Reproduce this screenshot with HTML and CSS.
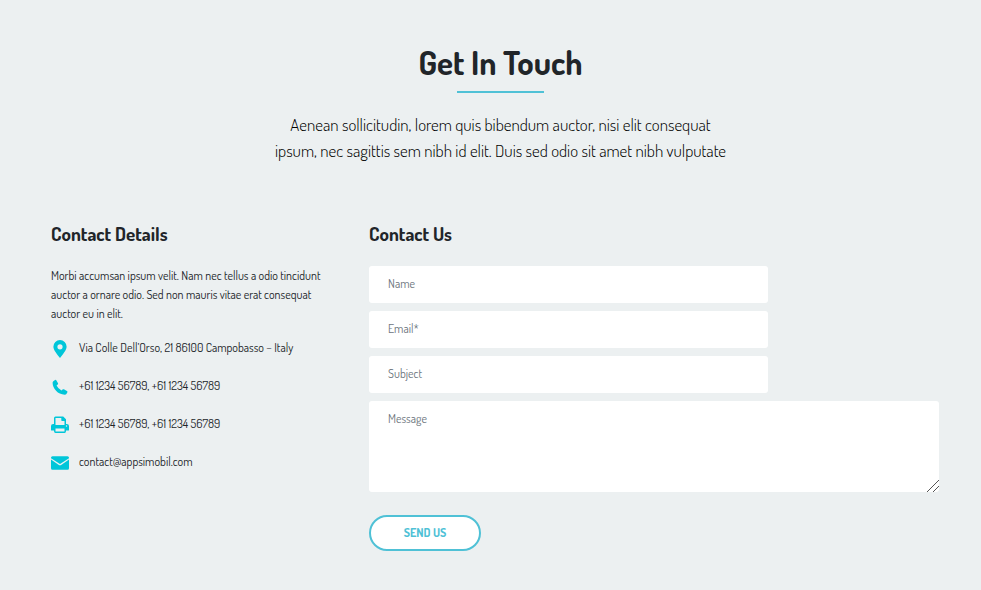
FILE: index.html
```html
<!DOCTYPE html>
<html lang="en">
<head>
<meta charset="utf-8">
<meta name="viewport" content="width=device-width, initial-scale=1">
<title>Get In Touch</title>
<link rel="stylesheet" href="styles.css">
</head>
<body>
<main class="contact">
  <header class="intro">
    <h1>Get In Touch</h1>
    <p>Aenean sollicitudin, lorem quis bibendum auctor, nisi elit consequat<br>ipsum, nec sagittis sem nibh id elit. Duis sed odio sit amet nibh vulputate</p>
  </header>
  <div class="columns">
    <section class="details">
      <h2>Contact Details</h2>
      <p>Morbi accumsan ipsum velit. Nam nec tellus a odio tincidunt<br>auctor a ornare odio. Sed non mauris vitae erat consequat<br>auctor eu in elit.</p>
      <ul>
        <li>
          <svg viewBox="0 0 18 18" aria-hidden="true"><path fill-rule="evenodd" d="M9 0a6.6 6.6 0 0 0-6.6 6.6C2.400 9.700 4.400 12.300 9 18c4.600-5.700 6.600-8.300 6.600-11.400A6.600 6.600 0 0 0 9 0zM9 4.200a2.600 2.600 0 1 1 0 5.200a2.600 2.600 0 0 1 0-5.200z"/></svg>
          <span>Via Colle Dell’Orso, 21 86100 Campobasso – Italy</span>
        </li>
        <li>
          <svg viewBox="0 0 18 18" aria-hidden="true"><path d="M2.300 3.200 4 1.900q.8-.5 1.300.3L7 5.300q.4.800-.3 1.300L5.600 7.600Q7 10.800 10.500 12.600l1-1.100q.600-.6 1.400-.200l3 1.600q.900.500.5 1.300l-1 1.700q-.500.800-1.600.8C7 16.800 1.600 10.500 1.600 4.800q0-1.100.7-1.600z"/></svg>
          <span>+61 1234 56789, +61 1234 56789</span>
        </li>
        <li>
          <svg viewBox="0 0 18 18" aria-hidden="true"><path fill-rule="evenodd" d="M3 8V2q0-1.500 1.500-1.500h7.700L15 3.300V8h.8Q18 8 18 10v4q0 .5-.5.500H15V15q0 2-1.500 2h-9Q3 17 3 15v-.500H.5q-.5 0-.5-.5v-4Q0 8 2.200 8zM4.500 2v7h9V5H11q-.7 0-.7-.7V2zM4.500 12.500v3h9v-3zM15.500 9.300a.7.700 0 1 0 0 1.400a.7.700 0 0 0 0-1.400z"/></svg>
          <span>+61 1234 56789, +61 1234 56789</span>
        </li>
        <li>
          <svg viewBox="0 0 18 18" aria-hidden="true"><path d="M1.500 2.200h15Q18 2.200 18 3.700v.5L9 10 0 4.200v-.5Q0 2.200 1.500 2.200zM0 5.600l7.500 5.200q1.500 1 3 0L18 5.600v8.700q0 1.500-1.500 1.500h-15Q0 15.800 0 14.300z"/></svg>
          <span>contact@appsimobil.com</span>
        </li>
      </ul>
    </section>
    <section>
      <h2>Contact Us</h2>
      <form class="form">
        <input type="text" name="name" placeholder="Name" aria-label="Name">
        <input type="email" name="email" placeholder="Email*" aria-label="Email" required>
        <input type="text" name="subject" placeholder="Subject" aria-label="Subject">
        <textarea name="message" placeholder="Message" aria-label="Message"></textarea>
        <button type="submit">SEND US</button>
      </form>
    </section>
  </div>
</main>
</body>
</html>
```
FILE: styles.css
```css
* {
  box-sizing: border-box;
}

body {
  margin: 0;
  background: #ecf0f1;
  color: #212529;
  font: 400 12px/19px Dosis, "Liberation Sans Narrow", Lato, sans-serif;
}

h1, h2, p, ul {
  margin: 0;
  padding: 0;
}

.contact {
  padding: 38px 31px 39px 51px;
}

.intro {
  text-align: center;
}

h1 {
  font-size: 33px;
  font-weight: 700;
  line-height: 48px;
}

h1::after {
  content: "";
  display: block;
  width: 87px;
  height: 2px;
  margin: 5px auto 0;
  background: #4fc1d6;
}

.intro p {
  margin-top: 19px;
  color: #000;
  font-size: 17px;
  font-weight: 300;
  line-height: 26px;
}

.columns {
  display: grid;
  grid-template-columns: 282px minmax(0, 1fr);
  gap: 36px;
  margin-top: 58px;
}

h2 {
  font-size: 19px;
  font-weight: 700;
  line-height: 24px;
}

.details p {
  margin-top: 20px;
  white-space: nowrap;
}

.details ul {
  display: grid;
  gap: 18px;
  margin-top: 15px;
  list-style: none;
}

.details li {
  display: flex;
  align-items: flex-start;
  gap: 10px;
  height: 20px;
  white-space: nowrap;
}

.details svg {
  width: 18px;
  height: 18px;
  margin-top: 2px;
  fill: #00c6d9;
}

.form {
  display: flex;
  flex-direction: column;
  align-items: flex-start;
  gap: 8px;
  max-width: 570px;
  margin-top: 20px;
}

input, textarea {
  padding: 8px 19px 10px;
  border: 0;
  border-radius: 3px;
  background: #fff;
  color: #212529;
  font: inherit;
}

input {
  width: 70%;
  height: 37px;
}

textarea {
  width: 100%;
  height: 91px;
  resize: vertical;
}

textarea::-webkit-scrollbar {
  width: 15px;
}

textarea::-webkit-resizer {
  background: linear-gradient(135deg, transparent 57%, #555 57%, #555 61%, transparent 61%, transparent 77%, #555 77%, #555 81%, transparent 81%);
}

::placeholder {
  color: #6c757d;
  opacity: 1;
}

button {
  width: 112px;
  height: 36px;
  margin-top: 15px;
  padding: 0 0 2px;
  border: 2px solid #4fc1d6;
  border-radius: 18px;
  background: #fff;
  color: #4fc1d6;
  font: inherit;
  font-weight: 700;
}
```
